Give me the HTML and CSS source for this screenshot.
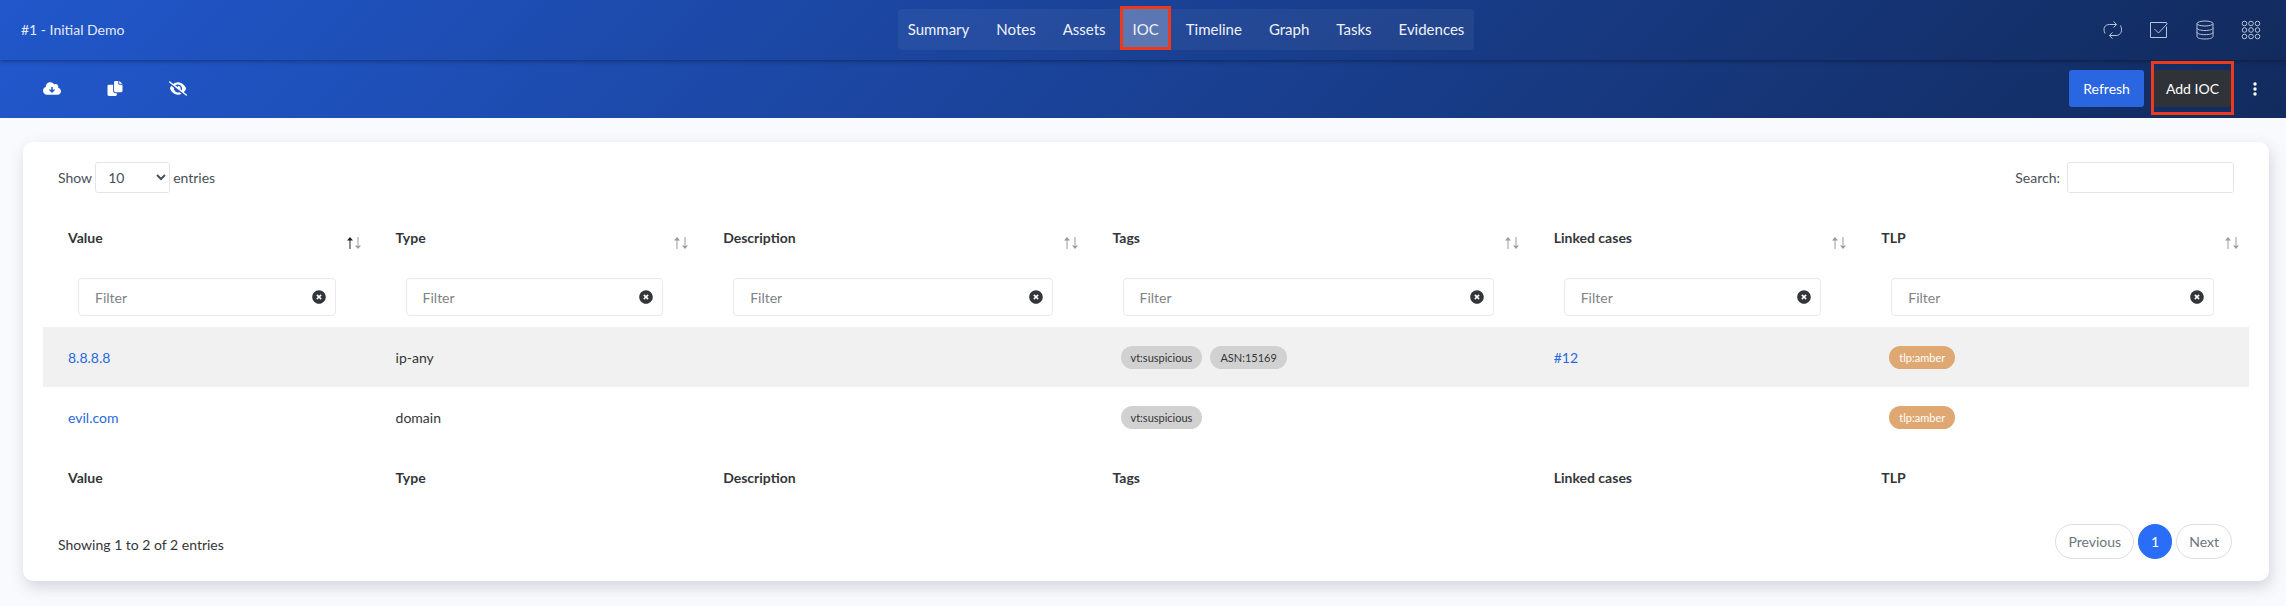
FILE: index.html
```html
<!DOCTYPE html>
<html lang="en">
<head>
<meta charset="utf-8">
<meta name="viewport" content="width=device-width, initial-scale=1">
<title>#1 - Initial Demo - IOC</title>
<link rel="stylesheet" href="styles.css">
</head>
<body>
<svg class="sprite" aria-hidden="true">
  <symbol id="clear" viewBox="0 0 512 512"><path d="M256 8C119 8 8 119 8 256s111 248 248 248 248-111 248-248S393 8 256 8zm90 296c5 5 5 12 0 17l-25 25c-5 5-12 5-17 0l-48-49-49 49c-5 5-12 5-17 0l-25-25c-5-5-5-12 0-17l49-48-49-49c-5-5-5-12 0-17l25-25c5-5 12-5 17 0l49 49 48-49c5-5 12-5 17 0l25 25c5 5 5 12 0 17l-49 49z"/></symbol>
</svg>
<header class="top">
  <div class="topbar">
    <a class="case" href="#">#1 - Initial Demo</a>
    <nav class="tabs" aria-label="Case sections">
      <a href="#">Summary</a>
      <a href="#">Notes</a>
      <a href="#">Assets</a>
      <a href="#" class="active marked" aria-current="page">IOC</a>
      <a href="#">Timeline</a>
      <a href="#">Graph</a>
      <a href="#">Tasks</a>
      <a href="#">Evidences</a>
    </nav>
    <div class="tools">
      <button type="button" aria-label="Switch case"><svg viewBox="0 0 20 20"><path d="M2 13.500C-.3 8.500 1.500 4.500 6.500 4.500h7M10.500 1.500l3.200 3-3.200 3M17.500 5.500c2.500 5 .5 10-4.500 10H6.500M9.500 12.500l-3.200 3 3.200 3"/></svg></button>
      <button type="button" aria-label="Tasks"><svg viewBox="0 0 20 20"><path d="M17.500 6.500v11h-16v-15h16v1M5.500 9l4 4L18.500 3.500"/></svg></button>
      <button type="button" aria-label="Data"><svg viewBox="0 0 20 20"><ellipse cx="10" cy="3.500" rx="8" ry="2.500"/><path d="M2 3.500v13c0 1.500 3.500 2.500 8 2.500s8-1 8-2.500v-13M2 8c0 1.500 3.500 2.500 8 2.500s8-1 8-2.500M2 12.200c0 1.500 3.500 2.500 8 2.500s8-1 8-2.500"/></svg></button>
      <button type="button" aria-label="Apps"><svg viewBox="0 0 20 20"><circle cx="3.500" cy="3.500" r="2.300"/><circle cx="10" cy="3.500" r="2.300"/><circle cx="16.500" cy="3.500" r="2.300"/><circle cx="3.500" cy="10" r="2.300"/><circle cx="10" cy="10" r="2.300"/><circle cx="16.500" cy="10" r="2.300"/><circle cx="3.500" cy="16.500" r="2.300"/><circle cx="10" cy="16.500" r="2.300"/><circle cx="16.500" cy="16.500" r="2.300"/></svg></button>
    </div>
  </div>
  <div class="actionbar">
    <div class="exports">
      <button type="button" aria-label="Download"><svg viewBox="0 0 640 512"><path fill-rule="evenodd" d="M537.600 226.600c4.100-10.700 6.400-22.400 6.400-34.600 0-53-43-96-96-96-19.700 0-38.100 6-53.300 16.200C367 64.200 315.300 32 256 32c-88.400 0-160 71.600-160 160 0 2.700.1 5.400.2 8.100C40.200 219.800 0 273.200 0 336c0 79.500 64.500 144 144 144h368c70.700 0 128-57.300 128-128 0-61.900-44-113.600-102.400-125.400zM320 190c-16 0-28 11-28 28v100l-27-27c-10-10-26-10-36 0s-10 26 0 36l74 74c9 9 25 9 34 0l74-74c10-10 10-26 0-36s-26-10-36 0l-27 27V218c0-17-12-28-28-28z"/></svg></button>
      <button type="button" aria-label="Copy"><svg viewBox="0 0 512 512"><path d="M272 0h96v96c0 18 14 32 32 32h112v208c0 26-22 48-48 48H272c-26 0-48-22-48-48V48c0-26 22-48 48-48zM400 0l112 96H400zM48 128h144v208c0 44 36 80 80 80h48v48c0 26-22 48-48 48H48c-26 0-48-22-48-48V176c0-26 22-48 48-48z"/></svg></button>
      <button type="button" aria-label="Hide columns"><svg viewBox="0 0 640 512"><path d="M39 5C28-3 13-1 5 9s-6 25 4 34l592 464c10 8 25 6 34-4s6-25-5-34L526 387c40-39 66-84 79-117 3-8 3-17 0-25-15-36-46-88-93-131C465 69 400 32 320 32c-68 0-125 26-169 61L39 5zm184 144c25-23 60-37 97-37 80 0 144 64 144 144 0 25-6 48-17 69l-38-30c5-15 7-31 5-48-6-46-46-88-94-87 2 5 3 10 3 16 0 10-2 20-6 28l-94-55zM373 390c-17 6-34 10-53 10-80 0-144-64-144-144 0-7 1-14 2-20L83 161c-24 31-40 61-48 82-3 8-3 17 0 25 15 36 46 88 93 131s112 81 192 81c47 0 88-13 124-33l-71-57z"/></svg></button>
    </div>
    <div class="actions">
      <button type="button" class="btn primary">Refresh</button>
      <button type="button" class="btn dark marked">Add IOC</button>
      <button type="button" class="more" aria-label="More"><svg viewBox="0 0 4 14"><circle cx="2" cy="2" r="1.700"/><circle cx="2" cy="7" r="1.700"/><circle cx="2" cy="12" r="1.700"/></svg></button>
    </div>
  </div>
</header>
<main class="page">
  <section class="card">
    <div class="controls">
      <label class="length">Show
        <select><option>10</option><option>25</option><option>50</option></select>
        entries</label>
      <label class="search">Search: <input type="search"></label>
    </div>
    <table class="iocs">
      <colgroup><col class="c-value"><col class="c-value"><col class="c-desc"><col class="c-tags"><col class="c-value"><col class="c-tlp"></colgroup>
      <thead>
        <tr class="titles">
          <th scope="col"><div class="th asc"><span>Value</span><svg viewBox="0 0 14 14"><path class="up" d="M2.500 4h1v9h-1zM0 4.500 3 1l3 3.500z"/><path class="down" d="M10.500 1h1v9h-1zM8 9.500l3 3.500 3-3.500z"/></svg></div></th>
          <th scope="col"><div class="th"><span>Type</span><svg viewBox="0 0 14 14"><path class="up" d="M2.500 4h1v9h-1zM0 4.500 3 1l3 3.500z"/><path class="down" d="M10.500 1h1v9h-1zM8 9.500l3 3.500 3-3.500z"/></svg></div></th>
          <th scope="col"><div class="th"><span>Description</span><svg viewBox="0 0 14 14"><path class="up" d="M2.500 4h1v9h-1zM0 4.500 3 1l3 3.500z"/><path class="down" d="M10.500 1h1v9h-1zM8 9.500l3 3.500 3-3.500z"/></svg></div></th>
          <th scope="col"><div class="th"><span>Tags</span><svg viewBox="0 0 14 14"><path class="up" d="M2.500 4h1v9h-1zM0 4.500 3 1l3 3.500z"/><path class="down" d="M10.500 1h1v9h-1zM8 9.500l3 3.500 3-3.500z"/></svg></div></th>
          <th scope="col"><div class="th"><span>Linked cases</span><svg viewBox="0 0 14 14"><path class="up" d="M2.500 4h1v9h-1zM0 4.500 3 1l3 3.500z"/><path class="down" d="M10.500 1h1v9h-1zM8 9.500l3 3.500 3-3.500z"/></svg></div></th>
          <th scope="col"><div class="th"><span>TLP</span><svg viewBox="0 0 14 14"><path class="up" d="M2.500 4h1v9h-1zM0 4.500 3 1l3 3.500z"/><path class="down" d="M10.500 1h1v9h-1zM8 9.500l3 3.500 3-3.500z"/></svg></div></th>
        </tr>
        <tr class="filters">
          <td><div class="filter"><input type="text" placeholder="Filter" aria-label="Filter value"><button type="button" aria-label="Clear"><svg><use href="#clear"/></svg></button></div></td>
          <td><div class="filter"><input type="text" placeholder="Filter" aria-label="Filter type"><button type="button" aria-label="Clear"><svg><use href="#clear"/></svg></button></div></td>
          <td><div class="filter"><input type="text" placeholder="Filter" aria-label="Filter description"><button type="button" aria-label="Clear"><svg><use href="#clear"/></svg></button></div></td>
          <td><div class="filter"><input type="text" placeholder="Filter" aria-label="Filter tags"><button type="button" aria-label="Clear"><svg><use href="#clear"/></svg></button></div></td>
          <td><div class="filter"><input type="text" placeholder="Filter" aria-label="Filter linked cases"><button type="button" aria-label="Clear"><svg><use href="#clear"/></svg></button></div></td>
          <td><div class="filter"><input type="text" placeholder="Filter" aria-label="Filter TLP"><button type="button" aria-label="Clear"><svg><use href="#clear"/></svg></button></div></td>
        </tr>
      </thead>
      <tbody>
        <tr>
          <td><a href="#">8.8.8.8</a></td>
          <td>ip-any</td>
          <td></td>
          <td><div class="badges"><span class="badge">vt:suspicious</span><span class="badge">ASN:15169</span></div></td>
          <td><a href="#">#12</a></td>
          <td><div class="badges"><span class="badge amber">tlp:amber</span></div></td>
        </tr>
        <tr>
          <td><a href="#">evil.com</a></td>
          <td>domain</td>
          <td></td>
          <td><div class="badges"><span class="badge">vt:suspicious</span></div></td>
          <td></td>
          <td><div class="badges"><span class="badge amber">tlp:amber</span></div></td>
        </tr>
      </tbody>
      <tfoot>
        <tr><th>Value</th><th>Type</th><th>Description</th><th>Tags</th><th>Linked cases</th><th>TLP</th></tr>
      </tfoot>
    </table>
    <div class="bottom">
      <p class="info">Showing 1 to 2 of 2 entries</p>
      <nav class="pages" aria-label="Pagination">
        <a href="#">Previous</a>
        <a href="#" class="current" aria-current="page">1</a>
        <a href="#">Next</a>
      </nav>
    </div>
  </section>
</main>
</body>
</html>
```
FILE: styles.css
```css
* { box-sizing: border-box; }

body {
  margin: 0;
  min-height: 100vh;
  background: #f9fafe;
  color: #333638;
  font: 14px/21px Lato, sans-serif;
}

a { color: #2a69e0; text-decoration: none; }
button { border: 0; padding: 0; background: none; font: inherit; cursor: pointer; }
svg { display: block; }
.sprite { display: none; }

/* Header */
.top { color: #fff; }

.topbar, .actionbar { background: linear-gradient(-45deg, #122b5e, #2157cb); }

.topbar {
  display: grid;
  grid-template-columns: 1fr auto 1fr;
  align-items: center;
  position: relative;
  height: 60px;
  padding: 0 15px 1px 21px;
  box-shadow: 0 1px 4px rgba(0, 0, 0, .4);
}

.case { color: #e4eaf6; }

.tabs {
  display: flex;
  gap: 7px;
  margin-left: 80px;
  border-radius: 4px;
  background: rgba(255, 255, 255, .05);
  font-size: 15px;
}

.tabs a { padding: 10px; color: #eef1f8; }
.tabs .active { background: rgba(255, 255, 255, .25); }

/* Red highlight frames */
.marked { position: relative; }
.marked::after {
  content: "";
  position: absolute;
  inset: -3px -2px 0 -3px;
  border: 3px solid #ee3a1c;
}
.btn.marked::after { inset: -9px -3px -8px; }

.tools { display: flex; justify-content: flex-end; gap: 6px; }
.tools button { padding: 10px; }
.tools svg {
  width: 20px;
  height: 20px;
  fill: none;
  stroke: #b9c3d8;
  stroke-width: 1;
}

.actionbar {
  display: flex;
  align-items: center;
  justify-content: space-between;
  height: 58px;
  padding: 0 29px 1px 43px;
}

.exports { display: flex; gap: 45px; }
.exports svg { width: 18px; height: 15px; fill: #fff; }

.actions { display: flex; align-items: center; gap: 10px; }
.btn { padding: 8px 14px; border-radius: 3px; color: #fff; }
.primary { background: #2a66e0; }
.dark { padding: 8px 12px; background: #2f3338; }
.more { padding: 8px 0 8px 12px; }
.more svg { width: 4px; height: 14px; fill: #fff; }

/* Card */
.page { padding: 24px 17px 24px 23px; }

.card {
  padding: 20px;
  border-radius: 10px;
  background: #fff;
  box-shadow: 2px 6px 15px rgba(69, 65, 78, .2);
}

.controls {
  display: flex;
  justify-content: space-between;
  padding: 0 15px;
  color: #495057;
}

.length, .search { display: flex; align-items: center; gap: 3px; }
.search { gap: 7px; }

.length select, .search input {
  height: 31px;
  border: 1px solid #e4e5ec;
  border-radius: 3px;
  background: #fff;
  color: #495057;
  font: inherit;
}
.length select { width: 75px; padding: 0 8px; }
.search input { width: 167px; padding: 0 8px; }

.iocs {
  width: 100%;
  margin-top: 14px;
  border-collapse: collapse;
  table-layout: fixed;
}
.c-value { width: 14.85%; }
.c-desc { width: 17.65%; }
.c-tags { width: 20%; }
.c-tlp { width: 17.8%; }

.iocs th { height: 60px; padding: 0 25px; text-align: left; font-weight: 700; }
.iocs td { height: 60px; padding: 0 25px; }

.th { display: flex; align-items: center; justify-content: space-between; margin-right: -15px; }
.th svg { width: 14px; height: 14px; margin-top: 12px; fill: #9a9b9c; }
.asc .up { fill: #222; }

.filter {
  display: flex;
  align-items: center;
  margin: 0 10px;
  padding-right: 9px;
  border: 1px solid #e8e9ef;
  border-radius: 4px;
}
.filter input { flex: 1; min-width: 0; height: 36px; padding: 0 16px; border: 0; background: none; font: inherit; }
.filter input::placeholder { color: #7f8388; }
.filter svg { width: 14px; height: 14px; fill: #333638; }

tbody tr:nth-child(odd) { background: #f1f1f1; }

.badges { display: flex; gap: 8px; padding-left: 8px; }
.badge { padding: 1px 10px; border-radius: 12px; background: #d1d1d1; font-size: 11px; }
.amber { background: #dfa772; color: #fff; }

.bottom {
  display: flex;
  align-items: center;
  justify-content: space-between;
  padding: 17px 17px 2px 15px;
}
.info { margin: 0; padding-top: 6px; }
.pages { display: flex; gap: 4px; }
.pages a { padding: 6px 12px; border: 1px solid #dcdde2; border-radius: 18px; color: #6c757d; }
.pages .current { border-color: #2a6ef8; background: #2a6ef8; color: #fff; }
```
